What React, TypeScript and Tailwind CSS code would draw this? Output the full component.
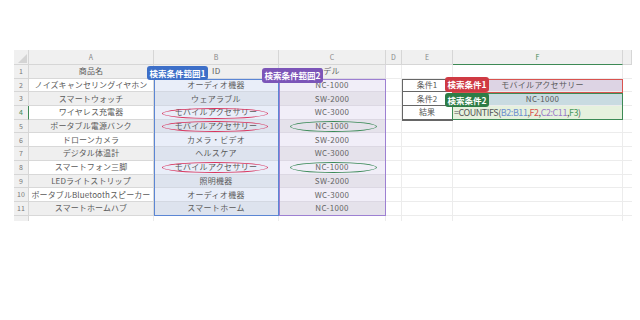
const FONT = '[font-family:"Noto_Sans_CJK_JP","Noto_Sans",sans-serif]'

const rows = [
  ['商品名', 'ID', 'モデル'],
  ['ノイズキャンセリングイヤホン', 'オーディオ機器', 'NC-1000'],
  ['スマートウォッチ', 'ウェアラブル', 'SW-2000'],
  ['ワイヤレス充電器', 'モバイルアクセサリー', 'WC-3000'],
  ['ポータブル電源バンク', 'モバイルアクセサリー', 'NC-1000'],
  ['ドローンカメラ', 'カメラ・ビデオ', 'SW-2000'],
  ['デジタル体温計', 'ヘルスケア', 'WC-3000'],
  ['スマートフォン三脚', 'モバイルアクセサリー', 'NC-1000'],
  ['LEDライトストリップ', '照明機器', 'SW-2000'],
  ['ポータブルBluetoothスピーカー', 'オーディオ機器', 'WC-3000'],
  ['スマートホームハブ', 'スマートホーム', 'NC-1000'],
]

const letters = ['A', 'B', 'C', 'D', 'E', 'F', '']

function rowTop(r: number) {
  return 15 + (r - 1) * 13.7
}

function Ellipse({ r, left, width, color }: { r: number; left: number; width: number; color: string }) {
  return (
    <div
      className={`absolute h-[11px] rounded-[50%] border-[1.6px] ${color}`}
      style={{ left, width, top: rowTop(r) + 1.4 }}
    />
  )
}

export default function App() {
  return (
    <div className={`w-[640px] h-[320px] bg-white pt-[50px] pl-[14px] ${FONT}`}>
      <div className="relative w-[618px]">
        <div className="grid grid-cols-[15px_125px_125px_107px_16px_51px_170px_9px] grid-rows-[15px_repeat(11,13.7px)_5px] text-[8px] text-[#5a5a5a]">
          {/* header row */}
          <div className="relative bg-[#f0f0f0] border-r border-b border-[#d6d6d6]">
            <svg className="absolute right-[1px] bottom-[1px]" width="9" height="9" viewBox="0 0 9 9">
              <polygon points="9,0 9,9 0,9" fill="#d4d4d4" />
            </svg>
          </div>
          {letters.map((l, i) => (
            <div
              key={l + i}
              className={`flex items-center justify-center bg-[#f0f0f0] border-r border-b text-[7px] ${
                l === 'F' ? 'border-b-[#3d8a55] text-[#3d8a55] border-r-[#d6d6d6]' : 'border-[#d6d6d6] text-[#888]'
              }`}
            >
              {l}
            </div>
          ))}

          {rows.map((row, idx) => {
            const r = idx + 1
            const odd = r % 2 === 1
            const rightRow = r >= 2 && r <= 4
            return [
              <div
                key={`n${r}`}
                className={`flex items-center justify-center bg-[#f0f0f0] border-r border-b border-[#d6d6d6] text-[7px] ${
                  r === 4 ? 'text-[#3d8a55] border-r-[#3d8a55]' : 'text-[#777]'
                }`}
              >
                {r}
              </div>,
              <div
                key={`a${r}`}
                className={`flex items-center justify-center whitespace-nowrap tracking-[0.1px] border-r border-b border-[#d8d8d8] ${
                  odd ? 'bg-[#efefef]' : 'bg-white'
                }`}
              >
                {row[0]}
              </div>,
              <div
                key={`b${r}`}
                className={`flex items-center justify-center whitespace-nowrap tracking-[0.3px] border-r border-b border-[#d3d8e2] ${
                  r === 1 ? 'bg-[#efefef] justify-start pl-[58px]' : odd ? 'bg-[#dde3ee]' : 'bg-[#e9eef9]'
                }`}
              >
                {row[1]}
              </div>,
              <div
                key={`c${r}`}
                className={`flex items-center justify-center whitespace-nowrap tracking-[0.3px] text-[#666] border-r border-b border-[#dcd8e3] ${
                  r === 1 ? 'bg-[#efefef] justify-start pl-[36px]' : odd ? 'bg-[#e5e2eb]' : 'bg-[#f1eef8]'
                }`}
              >
                {row[2]}
              </div>,
              <div key={`d${r}`} className="border-r border-b border-[#ececec]" />,
              <div
                key={`e${r}`}
                className={`flex items-center justify-center border-r border-b ${
                  rightRow ? 'border-[#666] text-[#555]' : 'border-[#ececec]'
                }`}
              >
                {r === 2 ? '条件1' : r === 3 ? '条件2' : r === 4 ? '結果' : ''}
              </div>,
              <div
                key={`f${r}`}
                className={`flex items-center border-r border-b border-[#ececec] whitespace-nowrap ${
                  r === 2
                    ? 'bg-[#ddd4e4] justify-center tracking-[0.3px]'
                    : r === 3
                    ? 'bg-[#c9dbe1] justify-center tracking-[0.3px]'
                    : r === 4
                    ? 'bg-[#e6f1de] pl-[1px] text-[9px] tracking-[-0.45px]'
                    : ''
                }`}
              >
                {r === 2 && <span className="pl-[10px]">モバイルアクセサリー</span>}
                {r === 3 && <span className="pl-[10px]">NC-1000</span>}
                {r === 4 && (
                  <span className="text-[#555]">
                    =COUNTIFS(<span className="text-[#6d8fcf]">B2:B11</span>,
                    <span className="text-[#d9534f]">F2</span>,
                    <span className="text-[#9b7bc8]">C2:C11</span>,
                    <span className="text-[#4a9a5c]">F3</span>)
                  </span>
                )}
              </div>,
              <div key={`g${r}`} className="border-b border-[#ececec]" />,
            ]
          })}

          {/* trailing partial row */}
          <div className="bg-[#f0f0f0] border-r border-[#d6d6d6]" />
          <div className="border-r border-[#ececec]" />
          <div className="border-r border-[#ececec]" />
          <div className="border-r border-[#ececec]" />
          <div className="border-r border-[#ececec]" />
          <div className="border-r border-[#ececec]" />
          <div className="border-r border-[#ececec]" />
          <div />
        </div>

        {/* range highlights */}
        <div className="absolute left-[140px] top-[29px] w-[125px] h-[137px] border border-[#5b86d4]" />
        <div className="absolute left-[265px] top-[29px] w-[107px] h-[137px] border border-[#9d80d2]" />
        <div className="absolute left-[388px] top-[29px] w-[51px] h-[41.5px] border border-[#666]" />
        <div className="absolute left-[438px] top-[29px] w-[171px] h-[14.2px] border border-[#d9534f]" />
        <div className="absolute left-[438px] top-[42.7px] w-[171px] h-[27.8px] border border-[#3d8a55]" />

        <Ellipse r={4} left={148} width={106} color="border-[#d8325c]" />
        <Ellipse r={5} left={148} width={106} color="border-[#d8325c]" />
        <Ellipse r={8} left={148} width={106} color="border-[#d8325c]" />
        <Ellipse r={5} left={276} width={87} color="border-[#3b8a58]" />
        <Ellipse r={8} left={276} width={87} color="border-[#3b8a58]" />

        {/* labels */}
        <div className="absolute left-[133px] top-[16px] w-[61px] h-[14px] rounded-[3px] bg-[#3d6fc8] text-white text-[8.5px] font-bold flex items-center justify-center whitespace-nowrap">
          検索条件範囲1
        </div>
        <div className="absolute left-[248px] top-[18px] w-[61px] h-[15px] rounded-[3px] bg-[#7c55b8] text-white text-[8.5px] font-bold flex items-center justify-center whitespace-nowrap">
          検索条件範囲2
        </div>
        <div className="absolute left-[431px] top-[27px] w-[44px] h-[15px] rounded-[3px] bg-[#cf3a43] text-white text-[8.5px] font-bold flex items-center justify-center whitespace-nowrap">
          検索条件1
        </div>
        <div className="absolute left-[431px] top-[43px] w-[44px] h-[14px] rounded-[3px] bg-[#2e7d46] text-white text-[8.5px] font-bold flex items-center justify-center whitespace-nowrap">
          検索条件2
        </div>
      </div>
    </div>
  )
}
